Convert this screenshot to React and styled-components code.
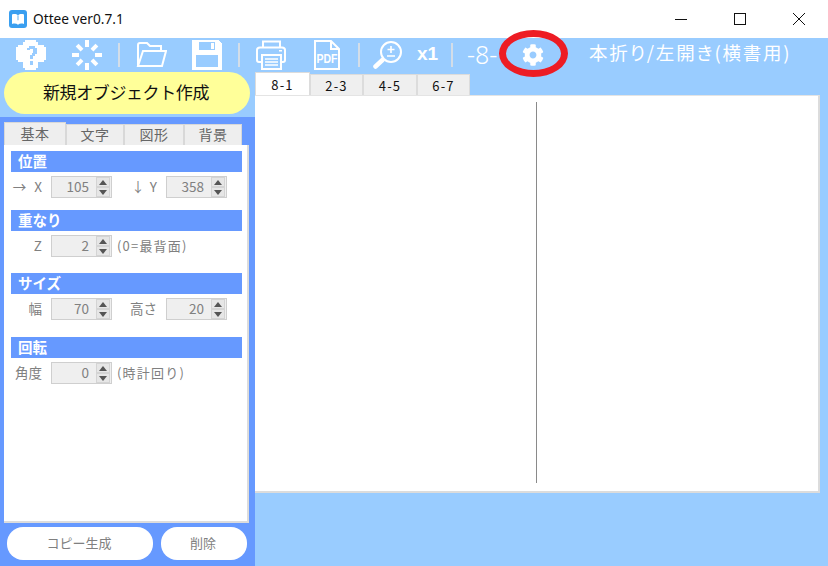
import React from "react";
import styled, { createGlobalStyle } from "styled-components";
import { FaCog } from "react-icons/fa";

const GlobalStyle = createGlobalStyle`
  html, body {
    margin: 0;
    padding: 0;
    overflow: hidden;
  }
  * {
    box-sizing: border-box;
  }
`;

const JP = `"Noto Sans CJK JP", "Liberation Sans", sans-serif`;

const Win = styled.div`
  width: 828px;
  height: 566px;
  display: flex;
  flex-direction: column;
  background: #99ccff;
  font-family: ${JP};
  overflow: hidden;
`;

const TitleBar = styled.div`
  height: 38px;
  background: #fff;
  display: flex;
  align-items: center;
  padding-left: 9px;
`;

const TitleText = styled.span`
  margin-left: 6px;
  margin-bottom: 2px;
  font-family: "Noto Sans", sans-serif;
  font-size: 13.7px;
  color: #111;
`;

const WinButtons = styled.div`
  margin-left: auto;
  display: flex;
`;

const WinButton = styled.div`
  width: 59px;
  height: 38px;
  display: flex;
  align-items: center;
  justify-content: center;
`;

const Toolbar = styled.div`
  position: relative;
  height: 34px;
  display: flex;
  align-items: center;
  color: #fff;
`;

const Slot = styled.div`
  margin-left: ${(p) => p.$ml}px;
  display: flex;
  align-items: center;
  flex: none;
`;

const Sep = styled.div`
  width: 2px;
  height: 24px;
  margin-left: ${(p) => p.$ml}px;
  background: #d3dde8;
  flex: none;
`;

const Zoom = styled.span`
  margin-left: 14px;
  margin-bottom: 2px;
  width: 20px;
  font-family: "Liberation Sans", sans-serif;
  font-size: 19px;
  font-weight: 700;
  flex: none;
`;

const PageNo = styled.span`
  margin-left: ${(p) => p.$ml}px;
  margin-bottom: 2px;
  width: 31px;
  font-family: "Noto Sans", sans-serif;
  font-weight: 300;
  font-size: 25px;
  white-space: nowrap;
  flex: none;
`;

const Mode = styled.span`
  margin-left: 45px;
  margin-bottom: 6px;
  font-size: 18.5px;
  letter-spacing: 1.8px;
  white-space: nowrap;
  font-feature-settings: "palt";
  flex: none;
`;

const RedRing = styled.div`
  position: absolute;
  left: 499px;
  top: -8px;
  width: 69px;
  height: 47px;
  border: 7px solid #ed1c24;
  border-radius: 50%;
`;

const Body = styled.div`
  flex: 1;
  display: flex;
  min-height: 0;
`;

const Side = styled.div`
  width: 255px;
  flex: none;
  display: flex;
  flex-direction: column;
`;

const NewButton = styled.div`
  height: 42px;
  width: 246px;
  margin-left: 4px;
  margin-bottom: 3px;
  padding: 0 2px 4px 0;
  border-radius: 21px;
  background: #ffff99;
  color: #111;
  font-size: 17px;
  letter-spacing: -0.4px;
  display: flex;
  align-items: center;
  justify-content: center;
  flex: none;
`;

const SideBody = styled.div`
  flex: 1;
  background: #6699ff;
  padding: 5px 6px 6px 4px;
  display: flex;
  flex-direction: column;
`;

const SideTabs = styled.div`
  display: flex;
  align-items: flex-end;
  height: 23px;
  flex: none;
`;

const SideTab = styled.div`
  width: ${(p) => p.$w}px;
  height: ${(p) => (p.$on ? 23 : 21)}px;
  padding-bottom: 2px;
  background: #eeeeee;
  border: 1px solid #d8d8d8;
  border-bottom: none;
  color: #666;
  font-size: 14px;
  letter-spacing: 0.5px;
  display: flex;
  align-items: center;
  justify-content: center;
`;

const Panel = styled.div`
  height: 378px;
  width: 245px;
  background: #fff;
  border-right: 2px solid #dcdcdc;
  border-bottom: 2px solid #dcdcdc;
  padding: 6px 5px 0 7px;
  flex: none;
`;

const Section = styled.div`
  height: ${(p) => p.$h}px;
`;

const SectionHead = styled.div`
  width: 231px;
  height: 21px;
  background: #6699ff;
  color: #fff;
  font-size: 14.5px;
  font-weight: 700;
  padding: 0 0 2px 7px;
  display: flex;
  align-items: center;
`;

const Row = styled.div`
  margin-top: 4px;
  height: 22px;
  display: flex;
  align-items: center;
  color: #808080;
  font-size: 13.5px;
`;

const Label = styled.span`
  width: ${(p) => p.$w}px;
  margin: 0 9px 2px 0;
  text-align: right;
  white-space: nowrap;
  word-spacing: ${(p) => p.$space || 0}px;
  flex: none;
`;

const Note = styled.span`
  margin: 0 0 2px 5px;
  white-space: nowrap;
  font-size: 13px;
  letter-spacing: 1.2px;
`;

const SpinBox = styled.div`
  width: 61px;
  height: 22px;
  background: #efefef;
  border: 1px solid #cfcfcf;
  display: flex;
  align-items: center;
  justify-content: flex-end;
  padding-right: 1px;
  flex: none;
`;

const SpinValue = styled.span`
  color: #808080;
  font-size: 13.5px;
  margin: 0 7px 2px 0;
`;

const SpinArrows = styled.div`
  width: 14px;
  height: 20px;
  display: flex;
  flex-direction: column;
  gap: 0;
`;

const SpinArrow = styled.div`
  flex: 1;
  background: #e6e6e6;
  border: 1px solid #d4d4d4;
  display: flex;
  align-items: center;
  justify-content: center;
  &::after {
    content: "";
    border-left: 4px solid transparent;
    border-right: 4px solid transparent;
    ${(p) => (p.$down ? "border-top: 5px solid #555;" : "border-bottom: 5px solid #555;")}
  }
`;

const Actions = styled.div`
  display: flex;
  gap: 8px;
  margin-top: 4px;
  padding-left: 3px;
`;

const ActionButton = styled.div`
  width: ${(p) => p.$w}px;
  height: 33px;
  padding: 0 2px 2px 0;
  border-radius: 16px;
  background: #fff;
  color: #808080;
  font-size: 13px;
  display: flex;
  align-items: center;
  justify-content: center;
`;

const Main = styled.div`
  flex: 1;
  display: flex;
  flex-direction: column;
  min-width: 0;
`;

const PageTabs = styled.div`
  height: 23px;
  display: flex;
  align-items: flex-end;
  flex: none;
`;

const PageTab = styled.div`
  width: ${(p) => p.$w}px;
  height: ${(p) => (p.$on ? 23 : 21)}px;
  background: ${(p) => (p.$on ? "#fff" : "#efefef")};
  border: 1px solid #dcdcdc;
  border-bottom: none;
  color: #111;
  font-size: 13px;
  display: flex;
  align-items: center;
  justify-content: center;
  letter-spacing: 1.2px;
`;

const Sheet = styled.div`
  width: 565px;
  height: 398px;
  background: #fff;
  border-top: 1px solid #e4e4e4;
  border-right: 2px solid #dcdcdc;
  border-bottom: 2px solid #dcdcdc;
  padding: 6px 0 8px 281px;
  display: flex;
  flex: none;
`;

const Fold = styled.div`
  width: 1px;
  height: 100%;
  background: #8a8a8a;
`;

function AppIcon() {
  return (
    <svg width="18" height="18" viewBox="0 0 18 18">
      <rect width="18" height="18" rx="3" fill="#3a9ff0" />
      <path d="M3 4.5 C5.5 3.6 7.6 4 9 5.4 C10.4 4 12.5 3.6 15 4.5 V14 C12.5 13.2 10.4 13.5 9 14.8 C7.6 13.5 5.5 13.2 3 14 Z" fill="#fff" />
      <path d="M8.6 5.4 H9.4 V10.5 L9 10 L8.6 10.5 Z" fill="#3a9ff0" />
    </svg>
  );
}

function HelpIcon() {
  return (
    <svg width="31" height="31" viewBox="0 0 31 31" shapeRendering="crispEdges">
      <path d="M9 0 H20 V2 H22 V5 H28 V7 H30 V20 H28 V22 H22 V28 H20 V30 H9 V28 H7 V22 H2 V20 H0 V7 H2 V5 H7 V2 H9 Z" fill="#fff" />
      <path d="M11 10 V8 H13 V6 H19 V8 H21 V14 H19 V16 H17 V19 H14 V15 H16 V13 H17 V9 H14 V10 Z M14 21 H17 V25 H14 Z" fill="#99ccff" />
    </svg>
  );
}

function SpinnerIcon() {
  return (
    <svg width="30" height="30" viewBox="0 0 30 30" fill="#fff">
      <rect x="13" y="0" width="4" height="7" />
      <rect x="13" y="23" width="4" height="7" />
      <rect x="0" y="13" width="7" height="4" />
      <rect x="23" y="13" width="7" height="4" />
      <rect x="13" y="0" width="4" height="7" transform="rotate(45 15 15) translate(0 1)" />
      <rect x="13" y="23" width="4" height="7" transform="rotate(45 15 15) translate(0 -1)" />
      <rect x="0" y="13" width="7" height="4" transform="rotate(45 15 15) translate(1 0)" />
      <rect x="23" y="13" width="7" height="4" transform="rotate(45 15 15) translate(-1 0)" />
    </svg>
  );
}

function FolderIcon() {
  return (
    <svg width="31" height="26" viewBox="0 0 31 26" fill="none" stroke="#fff" strokeWidth="2">
      <path d="M2 24 V3 Q2 1 4 1 H11 L14 4 H25 V8" />
      <path d="M2 24 L7 9 H30 L26 24 Z" />
    </svg>
  );
}

function SaveIcon() {
  return (
    <svg width="30" height="30" viewBox="0 0 30 30" shapeRendering="crispEdges">
      <path d="M0 0 H26 L30 4 V30 H0 Z" fill="#fff" />
      <rect x="7" y="2" width="16" height="8" fill="#99ccff" />
      <rect x="19" y="3" width="3" height="6" fill="#fff" />
      <rect x="4" y="15" width="22" height="12" fill="#99ccff" />
    </svg>
  );
}

function PrinterIcon() {
  return (
    <svg width="30" height="30" viewBox="0 0 30 30" fill="none" stroke="#fff" strokeWidth="2">
      <path d="M7 7 V1.5 H24 V7" />
      <path d="M6 22 H3 Q1 22 1 20 V10 Q1 7.5 4 7.5 H26 Q29 7.5 29 10 V20 Q29 22 27 22 H25" />
      <rect x="6" y="15" width="19" height="14" />
      <path d="M9 19 H22 M9 22 H22 M9 25 H22" strokeWidth="1.5" />
      <rect x="23" y="10" width="3" height="1.5" fill="#fff" stroke="none" />
    </svg>
  );
}

function PdfIcon() {
  return (
    <svg width="26" height="30" viewBox="0 0 26 30" fill="none" stroke="#fff" strokeWidth="2">
      <path d="M1 1 H17 L25 9 V29 H1 Z" />
      <path d="M17 1 V9 H25" />
      <text x="2.5" y="23" fill="#fff" stroke="none" fontFamily="Liberation Sans, sans-serif" fontSize="12" fontWeight="700" textLength="21" lengthAdjust="spacingAndGlyphs">PDF</text>
    </svg>
  );
}

function SearchIcon() {
  return (
    <svg width="30" height="28" viewBox="0 0 30 28" fill="none" stroke="#fff">
      <circle cx="18" cy="11" r="10" strokeWidth="2" />
      <path d="M9.5 19 L2.5 25.5" strokeWidth="4.5" strokeLinecap="round" />
      <path d="M18 5 V12 M14.5 8.5 H21.5 M14 15 H22" strokeWidth="1.6" />
    </svg>
  );
}

function WinIcon({ kind }) {
  return (
    <svg width="14" height="14" viewBox="0 0 14 14" fill="none" stroke="#111" strokeWidth="1">
      {kind === "min" && <path d="M1 7.5 H13" />}
      {kind === "max" && <rect x="1.5" y="1.5" width="11" height="11" />}
      {kind === "close" && <path d="M1 1 L13 13 M13 1 L1 13" />}
    </svg>
  );
}

function Spin({ value }) {
  return (
    <SpinBox>
      <SpinValue>{value}</SpinValue>
      <SpinArrows>
        <SpinArrow />
        <SpinArrow $down />
      </SpinArrows>
    </SpinBox>
  );
}

const sideTabs = [
  { name: "基本", w: 62, on: true },
  { name: "文字", w: 58 },
  { name: "図形", w: 60 },
  { name: "背景", w: 58 },
];

const pageTabs = [
  { name: "8-1", w: 55, on: true },
  { name: "2-3", w: 53 },
  { name: "4-5", w: 54 },
  { name: "6-7", w: 53 },
];

export default function App() {
  return (
    <Win>
      <GlobalStyle />
      <TitleBar>
        <AppIcon />
        <TitleText>Ottee ver0.7.1</TitleText>
        <WinButtons>
          <WinButton><WinIcon kind="min" /></WinButton>
          <WinButton><WinIcon kind="max" /></WinButton>
          <WinButton><WinIcon kind="close" /></WinButton>
        </WinButtons>
      </TitleBar>

      <Toolbar>
        <Slot $ml={16}><HelpIcon /></Slot>
        <Slot $ml={25}><SpinnerIcon /></Slot>
        <Sep $ml={16} />
        <Slot $ml={16}><FolderIcon /></Slot>
        <Slot $ml={25}><SaveIcon /></Slot>
        <Sep $ml={16} />
        <Slot $ml={16}><PrinterIcon /></Slot>
        <Slot $ml={28}><PdfIcon /></Slot>
        <Sep $ml={18} />
        <Slot $ml={13}><SearchIcon /></Slot>
        <Zoom>x1</Zoom>
        <Sep $ml={14} />
        <PageNo $ml={14}>-8-</PageNo>
        <Slot $ml={24}><FaCog size={22} /></Slot>
        <Mode>本折り/左開き(横書用)</Mode>
        <RedRing />
      </Toolbar>

      <Body>
        <Side>
          <NewButton>新規オブジェクト作成</NewButton>
          <SideBody>
            <SideTabs>
              {sideTabs.map((t) => (
                <SideTab key={t.name} $w={t.w} $on={t.on}>{t.name}</SideTab>
              ))}
            </SideTabs>
            <Panel>
              <Section $h={59}>
                <SectionHead>位置</SectionHead>
                <Row>
                  <Label $w={31} $space={5}>→ X</Label>
                  <Spin value="105" />
                  <Label $w={45} $space={2}>↓ Y</Label>
                  <Spin value="358" />
                </Row>
              </Section>
              <Section $h={63}>
                <SectionHead>重なり</SectionHead>
                <Row>
                  <Label $w={31}>Z</Label>
                  <Spin value="2" />
                  <Note>(0=最背面)</Note>
                </Row>
              </Section>
              <Section $h={64}>
                <SectionHead>サイズ</SectionHead>
                <Row>
                  <Label $w={31}>幅</Label>
                  <Spin value="70" />
                  <Label $w={45}>高さ</Label>
                  <Spin value="20" />
                </Row>
              </Section>
              <Section $h={60}>
                <SectionHead>回転</SectionHead>
                <Row>
                  <Label $w={31}>角度</Label>
                  <Spin value="0" />
                  <Note>(時計回り)</Note>
                </Row>
              </Section>
            </Panel>
            <Actions>
              <ActionButton $w={146}>コピー生成</ActionButton>
              <ActionButton $w={86}>削除</ActionButton>
            </Actions>
          </SideBody>
        </Side>

        <Main>
          <PageTabs>
            {pageTabs.map((t) => (
              <PageTab key={t.name} $w={t.w} $on={t.on}>{t.name}</PageTab>
            ))}
          </PageTabs>
          <Sheet>
            <Fold />
          </Sheet>
        </Main>
      </Body>
    </Win>
  );
}
